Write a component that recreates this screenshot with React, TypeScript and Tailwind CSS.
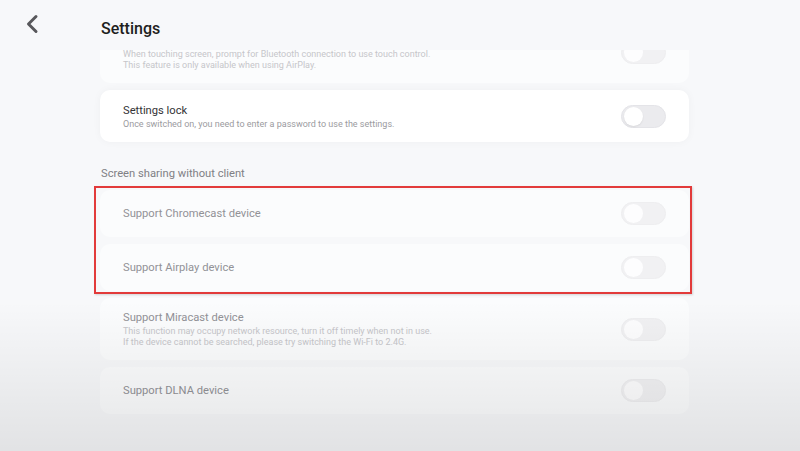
import React from 'react';

type Row = {
  title: string;
  desc?: string[];
  disabled?: boolean;
  tall?: boolean;
};

const Toggle = ({ disabled }: { disabled?: boolean }) => (
  <div
    className={`relative h-[23px] w-[45px] shrink-0 rounded-full border ${
      disabled ? 'border-[#eeeef0] bg-[#f1f1f3]' : 'border-[#e4e4e8] bg-[#ebebee]'
    }`}
  >
    <div
      className={`absolute left-[2px] top-[1px] h-[19px] w-[19px] rounded-full ${
        disabled ? 'bg-[#fdfdfe]' : 'bg-white shadow-[0_1px_2px_rgba(0,0,0,0.08)]'
      }`}
    />
  </div>
);

const Card = ({ row }: { row: Row }) => {
  const height = row.tall ? 'h-[62px]' : row.desc ? 'h-[52px]' : 'h-[47px]';
  return (
    <div
      className={`flex ${height} items-center justify-between rounded-[10px] pl-[23px] pr-[23px] ${
        row.disabled ? 'bg-[#fbfcfd]' : 'bg-white shadow-[0_0_8px_rgba(0,0,0,0.04)]'
      }`}
    >
      <div className="flex flex-col">
        <div
          className={`text-[11.2px] leading-[16px] ${row.disabled ? 'text-[#929297]' : 'text-[#333336]'}`}
        >
          {row.title}
        </div>
        {row.desc?.map((line) => (
          <div
            key={line}
            className={`text-[9px] leading-[11px] ${row.disabled ? 'text-[#c6c6ca]' : 'text-[#9b9ba0]'}`}
          >
            {line}
          </div>
        ))}
      </div>
      <Toggle disabled={row.disabled} />
    </div>
  );
};

export default function App() {
  return (
    <div
      className="relative h-[451px] w-[800px] overflow-hidden bg-[#f7f8fa]"
      style={{ fontFamily: 'Roboto, "Noto Sans", sans-serif' }}
    >
      {/* header */}
      <div className="relative z-10 flex h-[50px] items-start bg-[#f7f8fa]">
        <div className="w-[101px] pl-[25px] pt-[14px]">
          <svg width="14" height="20" viewBox="0 0 14 20" fill="none">
            <polyline
              points="11,2.5 3.5,10 11,17.5"
              stroke="#58585c"
              strokeWidth="3"
              strokeLinecap="round"
              strokeLinejoin="round"
            />
          </svg>
        </div>
        <div className="pt-[19px] text-[16px] font-medium leading-[20px] text-[#1e1e20]">Settings</div>
      </div>

      {/* scrolled list */}
      <div className="h-[401px] overflow-hidden">
        <div className="-mt-[29px] ml-[100px] w-[589px]">
          <div className="flex flex-col gap-[7px]">
            <Card
              row={{
                title: 'Bluetooth touch control',
                desc: [
                  'When touching screen, prompt for Bluetooth connection to use touch control.',
                  'This feature is only available when using AirPlay.',
                ],
                disabled: true,
                tall: true,
              }}
            />
            <Card
              row={{
                title: 'Settings lock',
                desc: ['Once switched on, you need to enter a password to use the settings.'],
              }}
            />
          </div>

          <div className="mb-[8px] mt-[24px] pl-px text-[11.2px] leading-[16px] text-[#808085]">
            Screen sharing without client
          </div>

          <div className="flex flex-col gap-[7px]">
            <div className="relative flex flex-col gap-[7px]">
              <Card row={{ title: 'Support Chromecast device', disabled: true }} />
              <Card row={{ title: 'Support Airplay device', disabled: true }} />
              <div className="pointer-events-none absolute -bottom-[3px] -left-[6px] -right-[3px] -top-[4px] border-2 border-[#e23a3a] shadow-[1px_1px_2px_rgba(0,0,0,0.15)]" />
            </div>
            <Card
              row={{
                title: 'Support Miracast device',
                desc: [
                  'This function may occupy network resource, turn it off timely when not in use.',
                  'If the device cannot be searched, please try switching the Wi-Fi to 2.4G.',
                ],
                disabled: true,
                tall: true,
              }}
            />
            <Card row={{ title: 'Support DLNA device', disabled: true }} />
          </div>
        </div>
      </div>

      {/* bottom fade */}
      <div className="pointer-events-none absolute bottom-0 left-0 h-[150px] w-full bg-gradient-to-b from-[rgba(0,0,0,0)] to-[rgba(0,0,0,0.085)]" />
    </div>
  );
}
